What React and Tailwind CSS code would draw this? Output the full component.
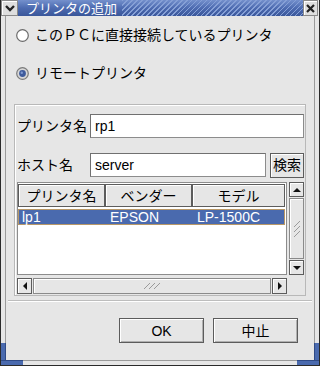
import React from "react";

const Arrow = ({ dir }) => {
  const pts = {
    up: "0,5 4,1 8,5",
    down: "0,1 4,5 8,1",
    left: "5,0 1,4 5,8",
    right: "1,0 5,4 1,8",
  }[dir];
  const wh = dir === "up" || dir === "down" ? { w: 8, h: 6 } : { w: 6, h: 8 };
  return (
    <svg width={wh.w} height={wh.h} viewBox={`0 0 ${wh.w} ${wh.h}`}>
      <polygon points={pts} fill="#111" />
    </svg>
  );
};

const Grip = ({ vertical }) =>
  vertical ? (
    <svg width="8" height="18" viewBox="0 0 8 18">
      <path d="M1 7 L7 1 M1 12 L7 6 M1 17 L7 11" stroke="#9a9a9a" strokeWidth="1" />
    </svg>
  ) : (
    <svg width="18" height="8" viewBox="0 0 18 8">
      <path d="M1 7 L7 1 M6 7 L12 1 M11 7 L17 1" stroke="#9a9a9a" strokeWidth="1" />
    </svg>
  );

const HeaderCell = ({ w, children }) => (
  <div
    className={`${w} h-[23px] flex items-center justify-center border border-[#5c5c5c] bg-[#e6e6e6] shadow-[inset_1px_1px_0_#ffffff] leading-none`}
  >
    {children}
  </div>
);

export default function App() {
  return (
    <div className="relative w-[320px] h-[366px] bg-[#e6e6e6] border-l border-r border-b border-[#2a2a2a] flex flex-col font-['Liberation_Sans','Noto_Sans_CJK_JP',sans-serif] text-[14px] text-black overflow-hidden">
      {/* title bar */}
      <div className="h-[16px] flex shrink-0">
        <div className="w-[17px] h-[16px] bg-[#dedede] border border-[#8a8a8a] shadow-[inset_1px_1px_0_#ffffff] flex items-center justify-center">
          <svg width="10" height="7" viewBox="0 0 10 7">
            <path d="M1 1 L5 5 L9 1" stroke="#222" strokeWidth="2.4" fill="none" />
          </svg>
        </div>
        <div className="flex-1 flex items-center bg-gradient-to-b from-[#7490cc] via-[#4d6bb0] to-[#3a579a]">
          <span className="pl-[8px] text-white text-[13px] leading-none whitespace-nowrap">プリンタの追加</span>
          <div className="flex-1 h-full ml-[5px] bg-[repeating-linear-gradient(135deg,#86a0d6_0px,#86a0d6_1.2px,transparent_1.2px,transparent_3.5px)]" />
        </div>
        <div className="w-[15px] h-[16px] bg-[#dedede] border border-[#8a8a8a] shadow-[inset_1px_1px_0_#ffffff] flex items-center justify-center">
          <svg width="9" height="9" viewBox="0 0 9 9">
            <path d="M1 1 L8 8 M8 1 L1 8" stroke="#222" strokeWidth="2.2" />
          </svg>
        </div>
        <div className="w-[1px]" />
      </div>

      {/* content box */}
      <div className="flex-1 mx-[4px] mb-[4px] border-l border-r border-b border-[#9a9a9a] flex flex-col">
        {/* radio 1 */}
        <div className="mt-[7px] h-[24px] flex items-center pl-[10px] gap-[6px]">
          <svg width="13" height="13" viewBox="0 0 13 13">
            <circle cx="6.5" cy="6.5" r="5.8" fill="#ffffff" stroke="#6a6a6a" strokeWidth="1.2" />
          </svg>
          <span className="leading-none whitespace-nowrap">このＰＣに直接接続しているプリンタ</span>
        </div>
        {/* radio 2 */}
        <div className="mt-[14px] h-[24px] flex items-center pl-[10px] gap-[6px]">
          <svg width="13" height="13" viewBox="0 0 13 13">
            <circle cx="6.5" cy="6.5" r="5.8" fill="#d8d8d8" stroke="#7a7a7a" strokeWidth="1.2" />
            <circle cx="6.5" cy="6.5" r="3.4" fill="#3d5a9c" />
            <circle cx="5.8" cy="5.8" r="1.2" fill="#7d98d0" />
          </svg>
          <span className="leading-none whitespace-nowrap">リモートプリンタ</span>
        </div>

        {/* frame */}
        <div className="mt-[19px] mx-[8px] h-[192px] border border-[#b8b8b8] shadow-[inset_1px_1px_0_#ffffff] flex flex-col pt-[9px] pl-[2px] pr-[1px]">
          <div className="h-[24px] flex items-center">
            <div className="w-[73px] leading-none whitespace-nowrap">プリンタ名</div>
            <div className="flex-1 h-[24px] bg-white border border-[#8c8c8c] border-t-[#707070] border-l-[#707070] flex items-center pl-[4px] leading-none">
              rp1
            </div>
          </div>
          <div className="mt-[15px] h-[24px] flex items-center">
            <div className="w-[73px] leading-none whitespace-nowrap">ホスト名</div>
            <div className="flex-1 h-[24px] bg-white border border-[#8c8c8c] border-t-[#707070] border-l-[#707070] flex items-center pl-[4px] leading-none">
              server
            </div>
            <div className="ml-[4px] w-[34px] h-[25px] border border-[#5c5c5c] bg-[#e6e6e6] shadow-[inset_1px_1px_0_#ffffff] flex items-center justify-center leading-none whitespace-nowrap">
              検索
            </div>
          </div>

          {/* table area */}
          <div className="mt-[5px] h-[112px] flex gap-[2px]">
            <div className="w-[270px] flex flex-col">
              <div className="h-[93px] bg-white border border-[#8c8c8c] flex flex-col">
                <div className="mt-[1px] flex">
                  <HeaderCell w="w-[87px]">プリンタ名</HeaderCell>
                  <HeaderCell w="w-[87px]">ベンダー</HeaderCell>
                  <HeaderCell w="w-[93px]">モデル</HeaderCell>
                </div>
                <div className="mt-[2px] w-[267px] h-[16px] bg-[#4a6aae] border border-[#b89868] flex items-center text-white leading-none">
                  <span className="w-[87px] pl-[3px]">lp1</span>
                  <span className="w-[87px] pl-[4px]">EPSON</span>
                  <span className="pl-[4px]">LP-1500C</span>
                </div>
              </div>
              <div className="mt-[3px] h-[16px] flex">
                <div className="w-[15px] h-[16px] border border-[#5c5c5c] bg-[#e6e6e6] shadow-[inset_1px_1px_0_#ffffff] flex items-center justify-center">
                  <Arrow dir="left" />
                </div>
                <div className="flex-1 h-[16px] mx-[1px] border border-[#8a8a8a] bg-[#e6e6e6] shadow-[inset_1px_1px_0_#ffffff] flex items-center justify-center">
                  <Grip />
                </div>
                <div className="w-[15px] h-[16px] border border-[#5c5c5c] bg-[#e6e6e6] shadow-[inset_1px_1px_0_#ffffff] flex items-center justify-center">
                  <Arrow dir="right" />
                </div>
              </div>
            </div>
            <div className="w-[15px] h-[93px] flex flex-col">
              <div className="h-[15px] border border-[#5c5c5c] bg-[#e6e6e6] shadow-[inset_1px_1px_0_#ffffff] flex items-center justify-center">
                <Arrow dir="up" />
              </div>
              <div className="flex-1 my-[1px] border border-[#8a8a8a] bg-[#e6e6e6] shadow-[inset_1px_1px_0_#ffffff] flex items-center justify-center">
                <Grip vertical />
              </div>
              <div className="h-[15px] border border-[#5c5c5c] bg-[#e6e6e6] shadow-[inset_1px_1px_0_#ffffff] flex items-center justify-center">
                <Arrow dir="down" />
              </div>
            </div>
          </div>
        </div>

        {/* separator */}
        <div className="mt-[4px] mx-[2px] h-[2px] border-t border-[#bdbdbd] border-b border-b-white" />

        {/* buttons */}
        <div className="mt-[16px] h-[25px] flex justify-end gap-[9px] pr-[16px]">
          <div className="w-[85px] h-[25px] border border-[#5c5c5c] bg-[#e6e6e6] shadow-[inset_1px_1px_0_#ffffff,inset_-1px_-1px_0_#b0b0b0] flex items-center justify-center leading-none">
            OK
          </div>
          <div className="w-[85px] h-[25px] border border-[#5c5c5c] bg-[#e6e6e6] shadow-[inset_1px_1px_0_#ffffff,inset_-1px_-1px_0_#b0b0b0] flex items-center justify-center leading-none">
            中止
          </div>
        </div>
      </div>

      {/* resize corner handles */}
      <div className="absolute left-0 bottom-0 w-[5px] h-[22px] bg-[#4a6aae] border-r border-[#2f4a86]" />
      <div className="absolute left-0 bottom-0 w-[22px] h-[5px] bg-[#4a6aae] border-t border-[#2f4a86]" />
      <div className="absolute right-0 bottom-0 w-[5px] h-[22px] bg-[#4a6aae] border-l border-[#2f4a86]" />
      <div className="absolute right-0 bottom-0 w-[22px] h-[5px] bg-[#4a6aae] border-t border-[#2f4a86]" />
    </div>
  );
}
